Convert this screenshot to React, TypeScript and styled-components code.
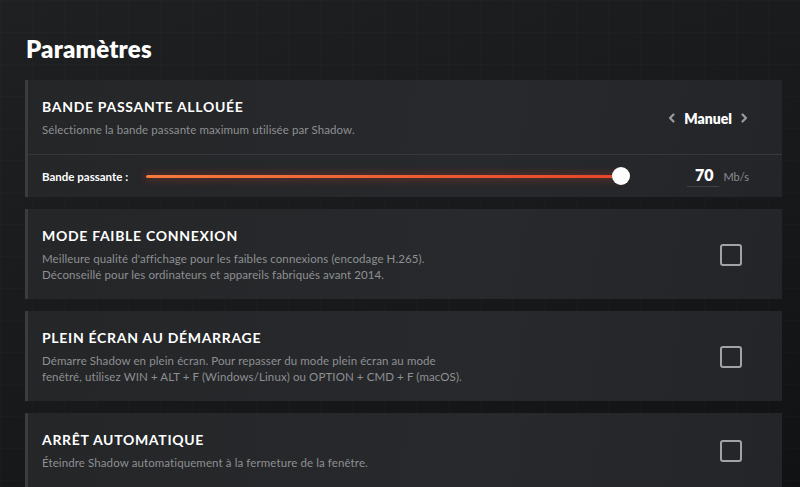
import styled, { createGlobalStyle } from "styled-components";

const GlobalStyle = createGlobalStyle`
  html, body {
    margin: 0;
    padding: 0;
    background: #141618;
  }
  body {
    font-family: "Lato", "Open Sans", sans-serif;
    color: #ffffff;
    -webkit-font-smoothing: antialiased;
  }
`;

const Page = styled.div`
  width: 800px;
  height: 487px;
  overflow: hidden;
  box-sizing: border-box;
  padding: 36px 18px 0 25px;
  background:
    linear-gradient(rgba(255, 255, 255, 0.012) 1px, transparent 1px) 0 0 / 32px 32px,
    linear-gradient(90deg, rgba(255, 255, 255, 0.012) 1px, transparent 1px) 0 0 / 32px 32px,
    linear-gradient(160deg, #1e2022 0%, #17191b 55%, #101214 100%);
`;

const Title = styled.h1`
  margin: 0 0 18px 1px;
  font-size: 24px;
  line-height: 26px;
  font-weight: 800;
  letter-spacing: 0.2px;
`;

const List = styled.div`
  display: flex;
  flex-direction: column;
  gap: 12px;
`;

const Card = styled.section`
  background: linear-gradient(100deg, #242628 0%, #27292c 60%, #232528 100%);
  border-left: 3px solid #3a3c3f;
`;

const Row = styled.div`
  display: flex;
  align-items: center;
  justify-content: space-between;
  padding: 18px 40px 16px 14px;
`;

const Texts = styled.div`
  display: flex;
  flex-direction: column;
  gap: 6px;
`;

const Heading = styled.h2`
  margin: 0;
  font-size: 14px;
  line-height: 18px;
  font-weight: 700;
  letter-spacing: 0.7px;
  text-transform: uppercase;
`;

const Desc = styled.p`
  margin: 0;
  font-size: 11.5px;
  line-height: 16px;
  color: #8e9093;
  letter-spacing: 0.1px;
`;

const Selector = styled.div`
  display: flex;
  align-items: center;
  gap: 6px;
  margin-right: -8px;
  font-size: 14px;
  font-weight: 800;
`;

const Chevron = styled.svg`
  width: 12px;
  height: 12px;
  stroke: #9a9c9f;
`;

const Divider = styled.div`
  height: 1px;
  background: #36383b;
`;

const SliderRow = styled.div`
  display: flex;
  align-items: center;
  padding: 10px 33px 10px 14px;
`;

const SliderLabel = styled.span`
  width: 104px;
  font-size: 11.5px;
  font-weight: 700;
`;

const Track = styled.div`
  position: relative;
  width: 485px;
  height: 20px;
  display: flex;
  align-items: center;
`;

const Fill = styled.div`
  height: 3px;
  border-radius: 2px;
  background: linear-gradient(90deg, #f47c3e, #e8452a);
  box-shadow: 0 0 8px 2px rgba(232, 70, 40, 0.28);
`;

const Thumb = styled.div`
  position: absolute;
  top: 50%;
  width: 18px;
  height: 18px;
  margin: -9px 0 0 -9px;
  border-radius: 50%;
  background: #ffffff;
`;

const ValueBox = styled.div`
  margin-left: auto;
  display: flex;
  align-items: baseline;
  gap: 4px;
`;

const Value = styled.span`
  width: 32px;
  padding-bottom: 1px;
  border-bottom: 1px solid #3e4043;
  text-align: right;
  font-size: 16px;
  line-height: 20px;
  font-weight: 800;
  box-sizing: border-box;
  padding-right: 6px;
`;

const Unit = styled.span`
  font-size: 11px;
  color: #8b8d90;
`;

const Checkbox = styled.div`
  width: 18px;
  height: 18px;
  border: 2px solid #a2a3a5;
  border-radius: 3px;
  flex-shrink: 0;
`;

const options = [
  {
    title: "Mode faible connexion",
    lines: [
      "Meilleure qualité d'affichage pour les faibles connexions (encodage H.265).",
      "Déconseillé pour les ordinateurs et appareils fabriqués avant 2014.",
    ],
  },
  {
    title: "Plein écran au démarrage",
    lines: [
      "Démarre Shadow en plein écran. Pour repasser du mode plein écran au mode",
      "fenêtré, utilisez WIN + ALT + F (Windows/Linux) ou OPTION + CMD + F (macOS).",
    ],
  },
  {
    title: "Arrêt automatique",
    lines: ["Éteindre Shadow automatiquement à la fermeture de la fenêtre."],
  },
];

const bandwidth = 0.98;

export default function App() {
  return (
    <>
      <GlobalStyle />
      <Page>
        <Title>Paramètres</Title>
        <List>
          <Card>
            <Row>
              <Texts>
                <Heading>Bande passante allouée</Heading>
                <Desc>Sélectionne la bande passante maximum utilisée par Shadow.</Desc>
              </Texts>
              <Selector>
                <Chevron viewBox="0 0 12 12" fill="none" strokeWidth="2.2" strokeLinecap="round" strokeLinejoin="round">
                  <path d="M7.5 2.5 4 6l3.5 3.5" />
                </Chevron>
                Manuel
                <Chevron viewBox="0 0 12 12" fill="none" strokeWidth="2.2" strokeLinecap="round" strokeLinejoin="round">
                  <path d="M4.5 2.5 8 6l-3.5 3.5" />
                </Chevron>
              </Selector>
            </Row>
            <Divider />
            <SliderRow>
              <SliderLabel>Bande passante :</SliderLabel>
              <Track>
                <Fill style={{ width: `${bandwidth * 100}%` }} />
                <Thumb style={{ left: `${bandwidth * 100}%` }} />
              </Track>
              <ValueBox>
                <Value>70</Value>
                <Unit>Mb/s</Unit>
              </ValueBox>
            </SliderRow>
          </Card>
          {options.map((o) => (
            <Card key={o.title}>
              <Row>
                <Texts>
                  <Heading>{o.title}</Heading>
                  <Desc>
                    {o.lines.map((l) => (
                      <span key={l}>
                        {l}
                        <br />
                      </span>
                    ))}
                  </Desc>
                </Texts>
                <Checkbox />
              </Row>
            </Card>
          ))}
        </List>
      </Page>
    </>
  );
}
